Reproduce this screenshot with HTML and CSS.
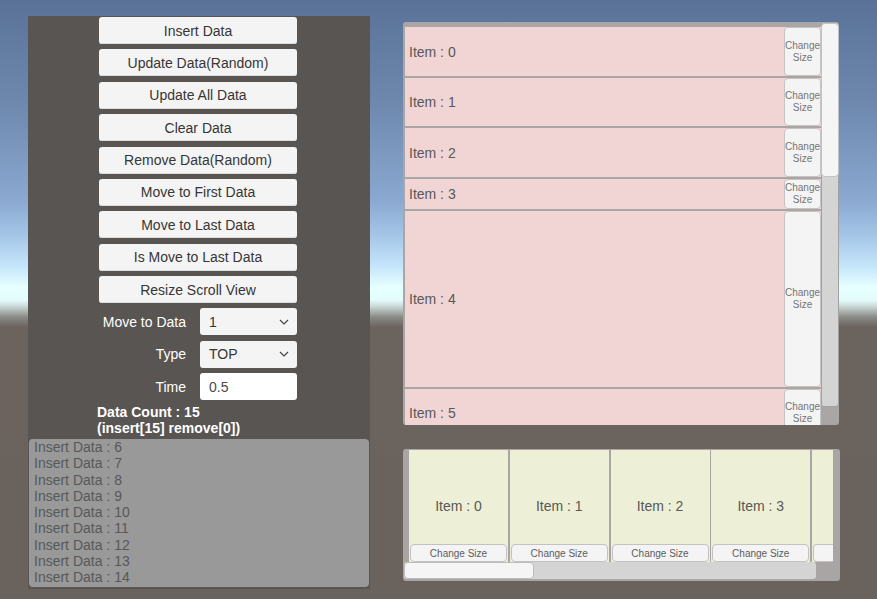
FILE: index.html
```html
<!DOCTYPE html>
<html>
<head>
<meta charset="utf-8">
<link rel="stylesheet" href="styles.css">
</head>
<body>
<div class="stage">
  <section class="panel">
    <div class="controls">
      <button class="btn">Insert Data</button>
      <button class="btn">Update Data(Random)</button>
      <button class="btn">Update All Data</button>
      <button class="btn">Clear Data</button>
      <button class="btn">Remove Data(Random)</button>
      <button class="btn">Move to First Data</button>
      <button class="btn">Move to Last Data</button>
      <button class="btn">Is Move to Last Data</button>
      <button class="btn">Resize Scroll View</button>
      <div class="row">
        <span class="label">Move to Data</span>
        <div class="select"><span>1</span><svg class="chev" width="10" height="6" viewBox="0 0 10 6"><polyline points="1,1 5,5 9,1" fill="none" stroke="#444" stroke-width="1.2"/></svg></div>
      </div>
      <div class="row">
        <span class="label">Type</span>
        <div class="select"><span>TOP</span><svg class="chev" width="10" height="6" viewBox="0 0 10 6"><polyline points="1,1 5,5 9,1" fill="none" stroke="#444" stroke-width="1.2"/></svg></div>
      </div>
      <div class="row">
        <span class="label">Time</span>
        <div class="input">0.5</div>
      </div>
      <div class="count">Data Count : 15<br>(insert[15] remove[0])</div>
    </div>
    <div class="log">
      <div class="log-lines">
        <div>Insert Data : 6</div>
        <div>Insert Data : 7</div>
        <div>Insert Data : 8</div>
        <div>Insert Data : 9</div>
        <div>Insert Data : 10</div>
        <div>Insert Data : 11</div>
        <div>Insert Data : 12</div>
        <div>Insert Data : 13</div>
        <div>Insert Data : 14</div>
      </div>
    </div>
  </section>

  <section class="right">
    <div class="vview">
      <div class="vcontent">
        <div class="vitem s49"><div class="name">Item : 0</div><div class="cs">Change<br>Size</div></div>
        <div class="vitem s48"><div class="name">Item : 1</div><div class="cs">Change<br>Size</div></div>
        <div class="vitem s49"><div class="name">Item : 2</div><div class="cs">Change<br>Size</div></div>
        <div class="vitem s30"><div class="name">Item : 3</div><div class="cs">Change<br>Size</div></div>
        <div class="vitem s176"><div class="name">Item : 4</div><div class="cs">Change<br>Size</div></div>
        <div class="vitem s48"><div class="name">Item : 5</div><div class="cs">Change<br>Size</div></div>
      </div>
      <div class="vside">
        <div class="vbar"><div class="vhandle"></div></div>
      </div>
    </div>

    <div class="hview">
      <div class="hviewport">
        <div class="hitem"><div class="hname">Item : 0</div><div class="hcs">Change Size</div></div>
        <div class="hitem"><div class="hname">Item : 1</div><div class="hcs">Change Size</div></div>
        <div class="hitem"><div class="hname">Item : 2</div><div class="hcs">Change Size</div></div>
        <div class="hitem"><div class="hname">Item : 3</div><div class="hcs">Change Size</div></div>
        <div class="hitem hpartial"><div class="hcs"></div></div>
      </div>
      <div class="hbarrow">
        <div class="hbar"><div class="hhandle"></div></div>
      </div>
    </div>
  </section>
</div>
</body>
</html>
```

FILE: styles.css
```css
* { box-sizing: border-box; }

html, body { margin: 0; padding: 0; }

body {
  width: 877px;
  height: 599px;
  overflow: hidden;
  font-family: "Liberation Sans", Arial, sans-serif;
  background: linear-gradient(to bottom,
    #5a7298 0px,
    #6d87ad 100px,
    #8aa8d0 200px,
    #a3c3e6 233px,
    #c6e6fb 267px,
    #e6ffff 287px,
    #e4fcfc 300px,
    #c7d4d2 307px,
    #8a8b87 317px,
    #6b635e 327px,
    #6a625c 599px);
}

.stage {
  display: flex;
  align-items: flex-start;
  padding: 16px 0 0 28px;
  height: 599px;
}

/* ---------- left panel ---------- */
.panel {
  width: 342px;
  height: 573px;
  background: #595553;
  display: flex;
  flex-direction: column;
  flex: none;
}

.controls {
  display: flex;
  flex-direction: column;
  padding: 1px 0 0 71px;
}

.btn {
  width: 198px;
  height: 27px;
  margin: 0 0 5.375px 0;
  padding: 0;
  border: none;
  border-radius: 3px;
  background: #f4f4f4;
  box-shadow: inset 0 -1px 0 #dcdcdc;
  color: #363636;
  font-family: "Liberation Sans", Arial, sans-serif;
  font-size: 14px;
  display: flex;
  align-items: center;
  justify-content: center;
}

.row {
  display: flex;
  align-items: center;
  height: 27px;
  margin-bottom: 5.4px;
}

.label {
  width: 87px;
  text-align: right;
  color: #ffffff;
  font-size: 14px;
  margin-right: 14px;
}

.select {
  width: 97px;
  height: 27px;
  background: #f4f4f4;
  border-radius: 3px;
  display: flex;
  align-items: center;
  justify-content: space-between;
  padding: 0 8px 0 9px;
  color: #363636;
  font-size: 14px;
}

.chev { display: block; }

.input {
  width: 97px;
  height: 27px;
  background: #ffffff;
  border-radius: 3px;
  display: flex;
  align-items: center;
  padding: 0 0 0 9px;
  color: #4a4a4a;
  font-size: 14px;
}

.count {
  margin: -1.4px 0 0 -2px;
  color: #ffffff;
  font-weight: bold;
  font-size: 14px;
  line-height: 16px;
}

.log {
  margin: 3px 1px 0 1px;
  width: 340px;
  height: 148px;
  background: #999999;
  border-radius: 4px;
  overflow: hidden;
  padding-left: 5px;
}

.log-lines {
  color: #585858;
  font-size: 14px;
  line-height: 16.25px;
}

/* ---------- right side ---------- */
.right {
  margin: 6px 0 0 33px;
  display: flex;
  flex-direction: column;
  flex: none;
}

.vview {
  width: 436px;
  height: 403px;
  background: #aaa6a6;
  border-radius: 3px;
  display: flex;
  padding-left: 2px;
  overflow: hidden;
}

.vcontent {
  width: 416px;
  height: 403px;
  padding-top: 5px;
  overflow: hidden;
  display: flex;
  flex-direction: column;
  gap: 2px;
  flex: none;
}

.vitem {
  flex: none;
  display: flex;
  background: #f1d5d5;
}

.s49 { height: 49px; }
.s48 { height: 48px; }
.s30 { height: 30px; }
.s176 { height: 176px; }

.vitem .name {
  flex: 1;
  display: flex;
  align-items: center;
  padding-left: 4px;
  color: #585858;
  font-size: 14px;
}

.vitem .cs {
  width: 37px;
  flex: none;
  background: #f4f4f4;
  border: 1px solid #c6c3c3;
  border-radius: 4px;
  display: flex;
  align-items: center;
  justify-content: center;
  text-align: center;
  color: #747474;
  font-size: 10px;
  line-height: 11.6px;
}

.vside {
  width: 18px;
  flex: none;
}

.vbar {
  margin-top: 1px;
  height: 384px;
  background: #d4d4d4;
  border: 1px solid #a3a0a0;
  border-top: none;
  border-radius: 3px;
}

.vhandle {
  height: 154px;
  margin-left: -1px;
  margin-right: -1px;
  background: #f5f5f5;
  border: 1px solid #c2c2c2;
  border-radius: 4px;
}

.hview {
  width: 437px;
  height: 132px;
  margin-top: 24px;
  background: #a9a5a5;
  border-radius: 3px;
  padding: 1px 7px 2px 1px;
  display: flex;
  flex-direction: column;
}

.hviewport {
  height: 112px;
  width: 429px;
  display: flex;
  gap: 1.75px;
  padding-left: 5px;
  overflow: hidden;
  flex: none;
}

.hitem {
  flex: none;
  width: 99px;
  height: 112px;
  background: #edf0d6;
  display: grid;
}

.hpartial { width: 21px; }

.hname, .hcs { grid-area: 1 / 1; }

.hname {
  align-self: center;
  justify-self: center;
  color: #585858;
  font-size: 14px;
}

.hcs {
  align-self: end;
  margin: 0 1px;
  height: 18px;
  background: #f4f4f4;
  border: 1px solid #c4c1c1;
  border-radius: 4px;
  display: flex;
  align-items: center;
  justify-content: center;
  color: #5c5c5c;
  font-size: 10px;
}

.hpartial .hcs { margin-right: 0; border-top-right-radius: 0; border-bottom-right-radius: 0; border-right: none; }

.hbarrow {
  display: flex;
  height: 17px;
  flex: none;
}

.hbar {
  width: 412px;
  height: 17px;
  background: #d4d4d4;
  border-radius: 3px;
}

.hhandle {
  width: 130px;
  height: 17px;
  background: #f5f5f5;
  border: 1px solid #bdbdbd;
  border-radius: 4px;
}
```
